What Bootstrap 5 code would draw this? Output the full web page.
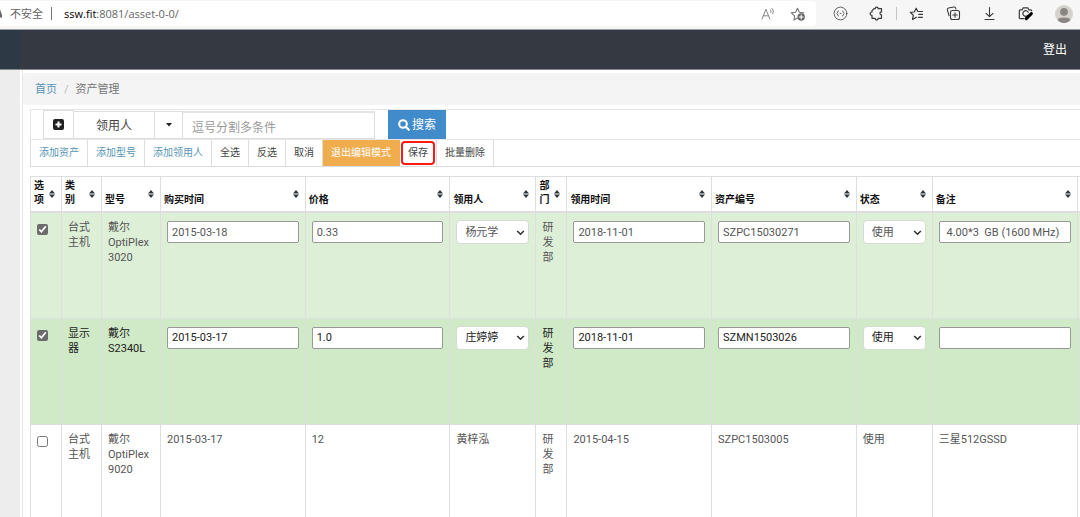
<!DOCTYPE html>
<html lang="zh-CN">
<head>
<meta charset="utf-8">
<meta name="viewport" content="width=device-width, initial-scale=1">
<title>资产管理</title>
<link href="https://cdn.jsdelivr.net/npm/bootstrap@5.3.0/dist/css/bootstrap.min.css" rel="stylesheet">
<style>
body{font-family:Roboto,"Noto Sans CJK SC",sans-serif;font-size:11px;line-height:15px;color:#333;background:#fff}
button{font-family:inherit}
svg{display:block}
/* browser bar */
.chrome-bar{height:29px;background:#f6f6f6;font-family:"Open Sans","Noto Sans CJK SC",sans-serif;padding:1px 7px 0 0}
.address{height:25px;background:#fff;border-radius:0 4px 4px 0;padding-right:3px;color:#666}
.tools{padding-left:6px}
.tool{border:0;background:none;padding:0;height:25px;width:36px;display:flex;align-items:center;justify-content:center;color:#3a3a3a}
.address .tool{width:30px;color:#777}
.tool svg{fill:none;stroke:currentColor;stroke-width:1.1;stroke-linecap:round;stroke-linejoin:round}
.warn{width:2px;height:8px;background:#666;clip-path:polygon(0 0,100% 70%,100% 100%,0 100%)}
.vline{width:1px;height:13px;margin:0 2px;background:#c4c4c4}
.address .vline{margin:0 12px 0 8px;background:#777}
/* page header */
.topnav{height:41px;background:#353941;border-top:1px solid #9ba1a5;border-bottom:1px solid #85898d;padding-right:13px}
.brand-block{width:20px;background:#2d3a45}
.topnav a{color:#fff;font-size:12px;padding-top:1px}
.side{width:20px;background:#ededed}
.content{margin-left:2px;border-left:1px solid #e6e6e6;min-width:0;padding-top:3px}
.crumbs{background:#f4f4f4;border-radius:4px 0 0 4px;height:32px;padding:0 12px;--bs-breadcrumb-divider-color:#bbb;--bs-breadcrumb-item-padding-x:7px;--bs-breadcrumb-item-active-color:#777}
a{color:#5795b3;text-decoration:none}
/* filter and action rows */
.panel{margin:4px 0 0 7px}
.filters{height:31px;border:1px solid #e6e6e6;border-right:0;padding-left:12px}
.filters .btn,.filters .form-control{border-radius:0;font-size:12px;line-height:16px;padding:0;border:1px solid #ddd;color:#444}
.filters .plus{width:31px;height:29px}
.filters .field{width:81px;height:28px;border-left:0;padding-top:2px}
.filters .drop{width:28px;height:28px;border-left:0}
.filters .form-control{width:192px;height:28px;border-left:0;padding:4px 9px 0;border-top:2px solid #e4e4e4}
.filters .form-control::placeholder{color:#9a9a9a}
.filters .go{width:58px;height:29px;margin-left:13px;gap:2px;background:#428bca;border-color:#428bca;color:#fff}
.actions{height:27px;border:1px solid #ddd;border-width:0 0 1px 1px}
.actions .btn{position:relative;font-size:10px;line-height:14px;padding:0 8px;border:0;border-right:1px solid #ddd;border-radius:0;color:#444}
.actions .btn.add{color:#5795b3}
.actions .btn.leave{background:#f0ad4e;border-color:#f0ad4e;color:#fff}
.ring{position:absolute;inset:1px 1px 1px 1px;border:2px solid #fb1a16;border-radius:4px}
/* asset table */
.assets{table-layout:fixed;width:100%;margin-top:9px;border-collapse:collapse}
.assets th,.assets td{border:1px solid #dedede;vertical-align:top}
.assets th{padding:0;font-size:10px;line-height:14px;color:#111;border-bottom-width:2px}
.assets th div{display:flex;align-items:end;justify-content:space-between;height:34px;padding:0 6px 4px 3px}
.assets th svg{margin-bottom:9px;flex:none}
.assets .stack{width:10px}
.assets td{height:106px;padding:7px 6px 0;color:#555}
.assets tr.picked td{background:#deefd8}
.assets tr.active-row td{background:#d0e9c6;color:#222}
.assets td:last-child,.assets th:last-child{padding:0;border-right:0}
.assets input[type=checkbox]{width:11px;height:11px;margin:4px 0 0;accent-color:#6b6b6b;display:block}
.assets input[type=text]{display:block;width:100%;height:22px;margin-top:1px;padding:0 4px;border:1px solid #999;border-radius:2px;background:#fff;color:inherit;font-size:11px}
.assets .form-select{height:24px;padding:0 18px 0 8px;font-size:11px;line-height:15px;color:inherit;border-color:#d5dcd3;border-radius:4px;background-color:#fff;background-size:9px 9px;background-position:right 3px center;
background-image:url("data:image/svg+xml,%3csvg xmlns='http://www.w3.org/2000/svg' viewBox='0 0 9 9'%3e%3cpath fill='none' stroke='%23333' stroke-width='1.6' d='M1.2 3l3.3 3.2L7.8 3'/%3e%3c/svg%3e")}
.c-tick{width:31px}.c-kind{width:40px}.c-model{width:59px}.c-user{width:86px}.c-state{width:76px}.c-end{width:3px}
</style>
</head>
<body>
<svg class="d-none" aria-hidden="true"><symbol id="sort" viewBox="0 0 6 8"><path fill="#2f363b" d="M3 0l3 3.4H0zM0 4.6h6L3 8z"/></symbol></svg>
<div class="vh-100 d-flex flex-column overflow-hidden">
  <div class="chrome-bar d-flex align-items-start flex-shrink-0">
    <div class="address d-flex align-items-center flex-grow-1">
      <span class="warn"></span>
      <span class="ms-1 ps-1">不安全</span>
      <span class="vline"></span>
      <span class="flex-grow-1 text-truncate"><span class="text-black">ssw.fit</span>:8081/asset-0-0/</span>
      <button class="tool" aria-label="朗读"><svg width="14" height="14" viewBox="0 0 14 14"><path d="M1 12L4.9 2.2 8.8 12M2.3 8.8h5.2M9.4 2.8c.8.8.8 1.9.4 2.7M10.8 1.2c1.8 1.5 1.9 3.9.9 5.6" stroke-width=".9"/></svg></button>
      <button class="tool" aria-label="收藏"><svg width="16" height="16" viewBox="0 0 16 16"><path d="M7.500 12l-3.600 2 .7-4.100-3.300-3 4.300-.6L7.500 2.200l1.900 4.100 4.300.6"/><circle cx="11.200" cy="11" r="3.700" fill="#666" stroke="none"/><path d="M9.200 11h4M11.200 9v4" stroke="#fff"/></svg></button>
    </div>
    <div class="tools d-flex align-items-center">
      <button class="tool" aria-label="扩展"><svg width="15" height="15" viewBox="0 0 15 15" stroke-opacity=".85"><circle cx="7.500" cy="7.500" r="6.400" stroke-width=".9"/><path d="M5.400 5c-1.200 0-.5 2-1.500 2.500 1 .5.3 2.500 1.500 2.500M9.600 5c1.200 0 .5 2 1.500 2.500-1 .5-.3 2.500-1.500 2.500M7 7.500h1" stroke-width=".9"/></svg></button>
      <button class="tool" aria-label="插件"><svg width="15" height="15" viewBox="0 0 15 15"><path d="M5 2.700h1.200c-.1-2 3.100-2 3 0h3.300v3.200c-2-.3-2.100 3 0 2.900v3.500H9.200c.1 2.200-3.100 2.200-3 0H3V9.400C.6 9.600.6 6 3 6V4.600z" stroke-width="1.200"/></svg></button>
      <span class="vline"></span>
      <button class="tool" aria-label="收藏夹"><svg width="16" height="14" viewBox="0 0 16 14"><path d="M7.300 10.200L3.500 12.500l.8-4.200L1.300 5.400l4-.4L7.200 1.200 8.800 4.500h4.700M9.800 7.400h3.700M9.300 10.300h4.200" stroke-width="1.200"/></svg></button>
      <button class="tool" aria-label="集锦"><svg width="15" height="15" viewBox="0 0 15 15"><rect x="4.500" y="4.500" width="9" height="9" rx="2"/><path d="M9 6.800v4.400M6.800 9h4.400M3 9.600L1.400 4.100c-.3-1 .2-1.800 1.100-2.100l5.300-1c1-.2 1.700.3 1.900 1.200l.2.8"/></svg></button>
      <button class="tool" aria-label="下载"><svg width="13" height="15" viewBox="0 0 13 15"><path d="M6.500 1.500v9M3 7.300l3.500 3.400L10 7.300M2 13.500h9"/></svg></button>
      <button class="tool" aria-label="截图"><svg width="15" height="15" viewBox="0 0 15 15"><path d="M6 12.700H2.300c-.7 0-1-.4-1-1V4.800c0-.7.300-1 1-1h1.900l1-2h4.600l1 2h1.900c.700 0 1 .300 1 1M9.800 9.300a2.800 2.800 0 1 1 .4-3" stroke-width="1.200"/><path d="M8.300 12.600l5-5" stroke="#000" stroke-width="3"/></svg></button>
      <button class="tool w-auto ms-2 ps-1" aria-label="用户"><svg width="18" height="18" viewBox="0 0 18 18" stroke-width="0"><circle cx="9" cy="9" r="9" fill="#d5d2ce" stroke="none"/><circle cx="9" cy="6.800" r="3.900" fill="#8c8682" stroke="none"/><path d="M2.500 15c1-3.200 12-3.200 13 0-3.300 4-9.700 4-13 0z" fill="#8c8682" stroke="none"/></svg></button>
    </div>
  </div>
  <nav class="topnav d-flex align-items-stretch flex-shrink-0">
    <div class="brand-block"></div>
    <a class="ms-auto align-self-center" href="#">登出</a>
  </nav>
  <div class="d-flex flex-grow-1 overflow-hidden">
    <aside class="side flex-shrink-0"></aside>
    <main class="content flex-grow-1">
      <nav aria-label="breadcrumb"><ol class="breadcrumb crumbs align-items-center mb-0">
        <li class="breadcrumb-item"><a href="#">首页</a></li>
        <li class="breadcrumb-item active" aria-current="page">资产管理</li>
      </ol></nav>
      <div class="panel">
        <form class="filters d-flex align-items-end">
          <button type="button" class="btn plus d-flex align-items-center justify-content-center" aria-label="添加条件"><svg width="11" height="11" viewBox="0 0 11 11"><rect width="11" height="11" rx="2" fill="#222"/><path d="M5.500 2.500v6M2.500 5.500h6" stroke="#fff" stroke-width="2"/></svg></button>
          <button type="button" class="btn field">领用人</button>
          <button type="button" class="btn drop d-flex align-items-center justify-content-center" aria-label="选择字段"><svg width="6" height="4" viewBox="0 0 6 4"><path d="M0 0h6L3 3.500z" fill="#222"/></svg></button>
          <input class="form-control" type="text" placeholder="逗号分割多条件" aria-label="条件">
          <button type="button" class="btn go d-flex align-items-center justify-content-center"><svg width="12" height="12" viewBox="0 0 11 11" fill="none" stroke="#fff" stroke-width="1.900" stroke-linecap="round"><circle cx="4.600" cy="4.600" r="3.500"/><path d="M7.400 7.400l2.500 2.500"/></svg>搜索</button>
        </form>
        <div class="actions d-flex">
          <button class="btn add">添加资产</button><button class="btn add">添加型号</button><button class="btn add">添加领用人</button><button class="btn">全选</button><button class="btn">反选</button><button class="btn">取消</button><button class="btn leave">退出编辑模式</button><button class="btn">保存<span class="ring"></span></button><button class="btn">批量删除</button>
        </div>
        <table class="assets">
          <colgroup><col class="c-tick"><col class="c-kind"><col class="c-model"><col><col><col class="c-user"><col class="c-tick"><col><col><col class="c-state"><col><col class="c-end"></colgroup>
          <thead><tr>
            <th><div><span class="stack">选项</span><svg width="6" height="8"><use href="#sort"/></svg></div></th>
            <th><div><span class="stack">类别</span><svg width="6" height="8"><use href="#sort"/></svg></div></th>
            <th><div>型号<svg width="6" height="8"><use href="#sort"/></svg></div></th>
            <th><div>购买时间<svg width="6" height="8"><use href="#sort"/></svg></div></th>
            <th><div>价格<svg width="6" height="8"><use href="#sort"/></svg></div></th>
            <th><div>领用人<svg width="6" height="8"><use href="#sort"/></svg></div></th>
            <th><div><span class="stack">部门</span><svg width="6" height="8"><use href="#sort"/></svg></div></th>
            <th><div>领用时间<svg width="6" height="8"><use href="#sort"/></svg></div></th>
            <th><div>资产编号<svg width="6" height="8"><use href="#sort"/></svg></div></th>
            <th><div>状态<svg width="6" height="8"><use href="#sort"/></svg></div></th>
            <th><div>备注<svg width="6" height="8"><use href="#sort"/></svg></div></th>
            <th></th>
          </tr></thead>
          <tbody>
          <tr class="picked">
            <td><input type="checkbox" checked aria-label="选择"></td><td>台式主机</td><td>戴尔 OptiPlex 3020</td>
            <td><input type="text" value="2015-03-18" aria-label="购买时间"></td>
            <td><input type="text" value="0.33" aria-label="价格"></td>
            <td><select class="form-select" aria-label="领用人"><option>杨元学</option></select></td>
            <td>研发部</td>
            <td><input type="text" value="2018-11-01" aria-label="领用时间"></td>
            <td><input type="text" value="SZPC15030271" aria-label="资产编号"></td>
            <td><select class="form-select" aria-label="状态"><option>使用</option></select></td>
            <td><input type="text" value=" 4.00*3  GB (1600 MHz)" aria-label="备注"></td><td></td>
          </tr>
          <tr class="active-row">
            <td><input type="checkbox" checked aria-label="选择"></td><td>显示器</td><td>戴尔 S2340L</td>
            <td><input type="text" value="2015-03-17" aria-label="购买时间"></td>
            <td><input type="text" value="1.0" aria-label="价格"></td>
            <td><select class="form-select" aria-label="领用人"><option>庄婷婷</option></select></td>
            <td>研发部</td>
            <td><input type="text" value="2018-11-01" aria-label="领用时间"></td>
            <td><input type="text" value="SZMN1503026" aria-label="资产编号"></td>
            <td><select class="form-select" aria-label="状态"><option>使用</option></select></td>
            <td><input type="text" value="" aria-label="备注"></td><td></td>
          </tr>
          <tr>
            <td><input type="checkbox" aria-label="选择"></td><td>台式主机</td><td>戴尔 OptiPlex 9020</td>
            <td>2015-03-17</td><td>12</td><td>黄梓泓</td><td>研发部</td><td>2015-04-15</td><td>SZPC1503005</td><td>使用</td><td>三星512GSSD</td><td></td>
          </tr>
          </tbody>
        </table>
      </div>
    </main>
  </div>
</div>
<script src="https://cdn.jsdelivr.net/npm/bootstrap@5.3.0/dist/js/bootstrap.bundle.min.js"></script>
</body>
</html>
